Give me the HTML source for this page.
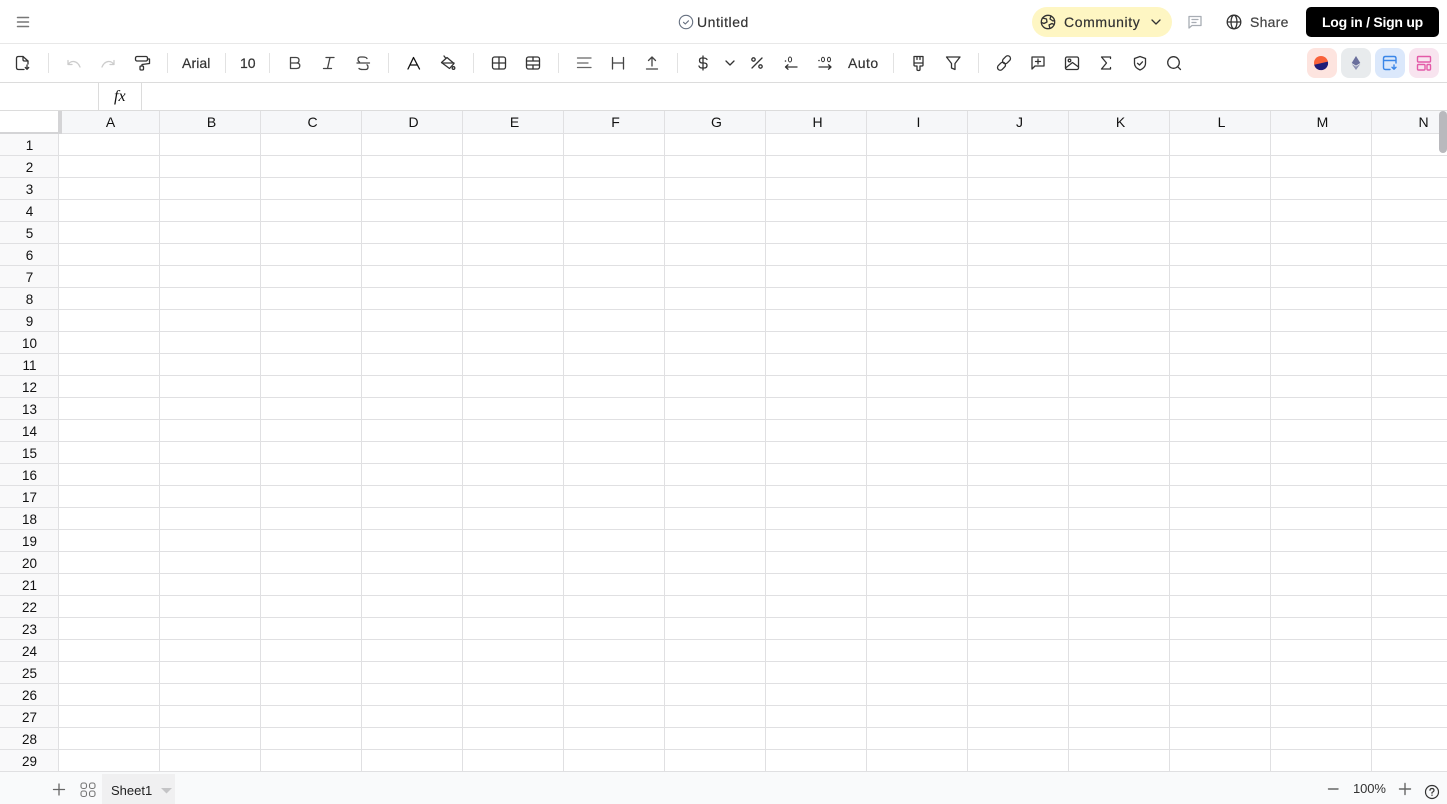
<!DOCTYPE html>
<html><head><meta charset="utf-8"><title>Untitled</title>
<style>
html,body{margin:0;padding:0;width:1447px;height:804px;overflow:hidden;background:#fff;font-family:"Liberation Sans",sans-serif;color:#111}
div{position:absolute;box-sizing:border-box}
.t{white-space:nowrap;line-height:20px;-webkit-text-stroke:.2px currentColor}
#grid{left:0;top:110px;width:1447px;height:661px;background-color:#fff;
background-image:repeating-linear-gradient(90deg,transparent 0,transparent 100px,#e0e0e2 100px,#e0e0e2 101px),repeating-linear-gradient(180deg,transparent 0,transparent 21px,#e0e0e2 21px,#e0e0e2 22px);
background-size:1447px 661px;background-position:59px 0,0 2px}
#rh{left:0;top:134px;width:59px;height:637px;
background-image:repeating-linear-gradient(180deg,#f9f9fa 0,#f9f9fa 21px,#e0e0e2 21px,#e0e0e2 22px);border-right:1px solid #e0e0e2}
#ch{left:59px;top:111px;width:1388px;height:23px;background:#f6f7f9;border-bottom:1px solid #e0e0e2;
background-image:repeating-linear-gradient(90deg,transparent 0,transparent 100px,#e0e0e2 100px,#e0e0e2 101px)}
.c{top:112px;width:101px;text-align:center;font-size:14px;line-height:20px}
.r{left:0;width:59px;text-align:center;font-size:13.5px;line-height:20px}
</style></head><body>
<div id="grid"></div><div id="rh"></div><div id="ch"></div>
<div style="left:0;top:111px;width:58px;height:21px;background:#fff"></div>
<div style="left:0;top:132px;width:58px;height:2px;background:#d4d4d6"></div>
<div style="left:58px;top:111px;width:4px;height:23px;background:#d4d4d6"></div>
<div style="left:0;top:0;width:1447px;height:44px;background:#fff;border-bottom:1px solid #e8e8e8"></div>
<div style="left:0;top:44px;width:1447px;height:39px;background:#fff;border-bottom:1px solid #dcdcdc"></div>
<div style="left:0;top:83px;width:1447px;height:28px;background:#fff;border-bottom:1px solid #dcdcdc"></div>
<div style="left:98px;top:83px;width:44px;height:27px;border-left:1px solid #dcdcdc;border-right:1px solid #dcdcdc"></div>
<div style="left:114px;top:87px;white-space:nowrap;font:italic 16px/20px 'Liberation Serif',serif">fx</div>

<div class="c" style="left:60px">A</div><div class="c" style="left:161px">B</div><div class="c" style="left:262px">C</div><div class="c" style="left:363px">D</div><div class="c" style="left:464px">E</div><div class="c" style="left:565px">F</div><div class="c" style="left:666px">G</div><div class="c" style="left:767px">H</div><div class="c" style="left:868px">I</div><div class="c" style="left:969px">J</div><div class="c" style="left:1070px">K</div><div class="c" style="left:1171px">L</div><div class="c" style="left:1272px">M</div><div class="c" style="left:1373px">N</div>

<div class="r" style="top:136px">1</div><div class="r" style="top:158px">2</div><div class="r" style="top:180px">3</div><div class="r" style="top:202px">4</div><div class="r" style="top:224px">5</div><div class="r" style="top:246px">6</div><div class="r" style="top:268px">7</div><div class="r" style="top:290px">8</div><div class="r" style="top:312px">9</div><div class="r" style="top:334px">10</div><div class="r" style="top:356px">11</div><div class="r" style="top:378px">12</div><div class="r" style="top:400px">13</div><div class="r" style="top:422px">14</div><div class="r" style="top:444px">15</div><div class="r" style="top:466px">16</div><div class="r" style="top:488px">17</div><div class="r" style="top:510px">18</div><div class="r" style="top:532px">19</div><div class="r" style="top:554px">20</div><div class="r" style="top:576px">21</div><div class="r" style="top:598px">22</div><div class="r" style="top:620px">23</div><div class="r" style="top:642px">24</div><div class="r" style="top:664px">25</div><div class="r" style="top:686px">26</div><div class="r" style="top:708px">27</div><div class="r" style="top:730px">28</div><div class="r" style="top:752px">29</div>

<div style="left:1439px;top:111px;width:8px;height:42px;background:#b9b9bd;border-radius:4px"></div>

<!-- footer -->
<div style="left:0;top:771px;width:1447px;height:33px;background:#f9fafb;border-top:1px solid #e0e0e2"></div>
<div style="left:102px;top:774px;width:73px;height:30px;background:#f0f0f1"></div>
<div class="t" style="left:111px;top:781px;font-size:13px;color:#222;-webkit-text-stroke:0">Sheet1</div>
<div class="t" style="left:1353px;top:779px;font-size:13px;color:#333;letter-spacing:-.1px;-webkit-text-stroke:0">100%</div>

<!-- top bar -->
<div class="t" style="left:697px;top:12px;font-size:14px;letter-spacing:.55px;color:#333">Untitled</div>
<div style="left:1032px;top:7px;width:140px;height:30px;background:#fef6c3;border-radius:15px"></div>
<div class="t" style="left:1064px;top:12px;font-size:14px;letter-spacing:.62px;color:#333">Community</div>
<div class="t" style="left:1250px;top:12px;font-size:14px;letter-spacing:.25px;color:#444">Share</div>
<div style="left:1306px;top:7px;width:133px;height:30px;background:#000;border-radius:5px"></div>
<div style="left:1322px;top:12px;white-space:nowrap;line-height:20px;font-size:14px;font-weight:700;color:#fff;letter-spacing:-.25px">Log in / Sign up</div>

<!-- toolbar text -->
<div class="t" style="left:182px;top:53px;font-size:14px;color:#333;letter-spacing:.1px">Arial</div>
<div class="t" style="left:240px;top:53px;font-size:14px;color:#333">10</div>
<div class="t" style="left:848px;top:53px;font-size:14px;color:#333;letter-spacing:.45px">Auto</div>

<!-- right buttons -->
<div style="left:1307px;top:48px;width:30px;height:30px;background:#fde4df;border-radius:8px"></div>
<div style="left:1341px;top:48px;width:30px;height:30px;background:#e8ebed;border-radius:8px"></div>
<div style="left:1375px;top:48px;width:30px;height:30px;background:#dbe8fb;border-radius:8px"></div>
<div style="left:1409px;top:48px;width:30px;height:30px;background:#f8e4ef;border-radius:8px"></div>

<svg width="1447" height="804" viewBox="0 0 1447 804" style="position:absolute;left:0;top:0" fill="none" stroke="#444" stroke-width="1.3" stroke-linecap="round" stroke-linejoin="round">
<!-- separators -->
<g stroke="#e2e2e2" stroke-width="1" stroke-linecap="butt">
<path d="M48.500 53V73M167.500 53V73M225.500 53V73M269.500 53V73M388.500 53V73M473.500 53V73M558.500 53V73M677.500 53V73M893.500 53V73M978.500 53V73"/>
</g>
<!-- menu -->
<path d="M17.500 17.500H28.500M17.500 22H28.500M17.500 26.500H28.500" stroke="#777" stroke-width="1.500"/>
<!-- saved check -->
<g stroke="#667080" stroke-width="1.100"><circle cx="686" cy="22" r="6.700"/><path d="M683.500 22.300L685.300 24L688.500 20.800"/></g>
<!-- community globe -->
<g stroke="#333" stroke-width="1.300"><circle cx="1048" cy="22" r="6.700"/><path d="M1042.500 18L1046.500 19L1047 22L1044 23.500L1041.500 22.500M1051 16L1050 19L1053 21L1054.500 20.500M1050 28.500L1049 25L1052 23.500L1054 24.500"/></g>
<path d="M1152 20L1156 24L1160 20" stroke="#333" stroke-width="1.300"/>
<!-- comment grey -->
<g stroke="#a8adb4" stroke-width="1.300"><path d="M1189 16.500H1201V25.500H1192L1189 28Z"/><path d="M1192 19.500H1198M1192 22.500H1196"/></g>
<!-- share globe -->
<g stroke="#333"><circle cx="1234" cy="22" r="6.800"/><ellipse cx="1234" cy="22" rx="3" ry="6.800"/><path d="M1227.500 22H1240.500"/></g>

<!-- file -->
<path d="M24 69.500H18.500Q16.500 69.500 16.500 67.500V58.500Q16.500 56.500 18.500 56.500H23L28 61V64" stroke="#333"/>
<path d="M23 56.500V59.500Q23 61 24.500 61H28M27 65V69M25.300 67.500L27 69.300L28.700 67.500" stroke="#333"/>
<!-- undo redo -->
<g stroke="#ccc"><path d="M68 60.500V64.500H72M68.500 64C71 60.500 77 60 80 67"/><path d="M114 60.500V64.500H110M113.500 64C111 60.500 105 60 102 67"/></g>
<!-- roller -->
<g stroke="#333"><rect x="135.500" y="56.500" width="12" height="4.500" rx="1.500"/><path d="M147.500 59H149.500V63.500L142 64.500V66"/><rect x="140" y="66" width="3.500" height="4" rx="1"/></g>
<!-- B I S -->
<g stroke="#444"><path d="M290.500 57.500H296Q299 57.500 299 60.200Q299 63 296 63H290.500ZM290.500 63H296.500Q299.800 63 299.800 65.800Q299.800 68.500 296.500 68.500H290.500Z"/>
<path d="M326 57.500H334M323.500 68.500H331.500M330 57.500L327.500 68.500"/>
<path d="M357 63H369.500M367 58.500Q366 57 363 57H360.500Q358 57 358 59.500Q358 61.500 359.500 62M359 68.500Q360 69.500 362.500 69.500H365.500Q368 69.500 368 67Q368 65.500 367 64.800"/></g>
<!-- A -->
<path d="M408 69L413.500 57.500L419.500 69M410 65H417.500" stroke="#111"/>
<!-- bucket -->
<g stroke="#333"><path d="M444 56L446 58.500M441.500 62.500L447 57.500L454 63.500L449.500 68.500Z"/><path d="M442 63H454"/><circle cx="453.500" cy="68" r="1.300"/></g>
<!-- borders -->
<g stroke="#333"><rect x="492.500" y="57" width="13" height="12" rx="2"/><path d="M499 57V69M492.500 63H505.500"/>
<rect x="526.500" y="57" width="13" height="12" rx="2"/><path d="M526.500 61H539.500M526.500 65H539.500M533 57V61M533 65V69"/></g>
<!-- align -->
<g stroke="#666"><path d="M577.500 58H591M577.500 63H588M577.500 67.500H591"/></g>
<g stroke="#444"><path d="M612.500 57.500V69M623.500 57.500V69M612.500 63H623.500"/>
<path d="M646.500 69H657.500M652 66V57.500M648.500 60.500L652 57L655.500 60.500"/></g>
<!-- dollar -->
<g stroke="#333"><path d="M703 56V70M707 59.500Q706 58 703.500 58H702Q699.500 58 699.500 60.500Q699.500 63 702.500 63H704Q707 63 707 65.500Q707 68 704 68H702Q699.500 68 699 66"/>
<path d="M726 61L730 65L734 61"/>
<path d="M752 68L762 58"/><circle cx="753.500" cy="59.500" r="1.700"/><circle cx="760.500" cy="66.500" r="1.700"/>
<!-- decimals -->
<path d="M785.500 67H797M785.500 67L788 64.800M785.500 67L788 69.200"/>
<path d="M819 67H831M831 67L828.500 64.800M831 67L828.500 69.200"/></g>
<g fill="#333" stroke="none"><circle cx="785.500" cy="61" r=".8"/><circle cx="819" cy="60.500" r=".8"/></g>
<g stroke="#333" stroke-width="1"><ellipse cx="790" cy="59.500" rx="1.600" ry="2.500"/><ellipse cx="823" cy="59.500" rx="1.500" ry="2.300"/><ellipse cx="829" cy="59.500" rx="1.500" ry="2.300"/></g>
<!-- brush -->
<g stroke="#333"><path d="M914 56.500H923V63H914ZM914 63V65Q914 66 915 66H917V69.500Q917 70.500 918.500 70.500Q920 70.500 920 69.500V66H922Q923 66 923 65V63"/><path d="M917 57V59.500M920 57V59.500"/></g>
<!-- filter -->
<path d="M946.500 57H960L955 63.500V69.500L951.500 68V63.500Z" stroke="#333"/>
<!-- link -->
<g stroke="#333"><rect x="997" y="63.500" width="9" height="5.500" rx="2.750" transform="rotate(-45 1001.500 66.250)"/><rect x="1002" y="57" width="9" height="5.500" rx="2.750" transform="rotate(-45 1006.500 59.750)"/></g>
<!-- comment plus -->
<g stroke="#333"><path d="M1032 57H1044V66H1035L1032 69Z"/><path d="M1038 59V64M1035.500 61.500H1040.500"/></g>
<!-- image -->
<g stroke="#333"><rect x="1065.500" y="57" width="13" height="12.500" rx="1.500"/><circle cx="1069.500" cy="60.500" r="1.300"/><path d="M1065.500 68L1072.500 62.500L1078.500 67"/></g>
<!-- sigma -->
<path d="M1110.500 58.500V57H1101.500L1106.500 63L1101.500 69H1110.500V67.500" stroke="#333"/>
<!-- shield -->
<g stroke="#333"><path d="M1140 56.500L1145.500 58.500V63.500Q1145.500 67.500 1140 70Q1134.500 67.500 1134.500 63.500V58.500Z"/><path d="M1137.500 63.300L1139.500 65L1142.500 61.800"/></g>
<!-- search -->
<g stroke="#333"><circle cx="1173.500" cy="62.500" r="5.800"/><path d="M1177.800 66.800L1180.500 69.500"/></g>

<!-- logos -->
<circle cx="1321" cy="63" r="7" fill="#f9623b" stroke="none"/>
<path d="M1314.200 64.700L1327.900 61.600A7 7 0 0 1 1314.200 64.700Z" fill="#1f1c78" stroke="none"/>
<path d="M1356 56L1360.300 63L1356 65.600L1351.700 63Z" fill="#6a6f9c" stroke="none"/>
<path d="M1351.700 64L1356 66.600L1360.300 64L1356 70Z" fill="#8e92b4" stroke="none"/>
<g stroke="#3a86e8" stroke-width="1.400"><path d="M1390 69.500H1385.500Q1383.500 69.500 1383.500 67.500V58.500Q1383.500 56.500 1385.500 56.500H1394Q1396 56.500 1396 58.500V63M1383.500 60.500H1396"/><path d="M1394 65V69M1392 67.300L1394 69.200L1396 67.300"/></g>
<g stroke="#e35aa8" stroke-width="1.400"><rect x="1417.500" y="56.500" width="13" height="5.500" rx="1"/><rect x="1417.500" y="64.500" width="7.500" height="5.500" rx="1"/><rect x="1427" y="64.500" width="3.500" height="5.500" rx="1"/></g>

<!-- footer icons -->
<path d="M53.500 789.500H64.500M59 784V795" stroke="#666" stroke-width="1.300"/>
<g stroke="#777" stroke-width="1.100"><rect x="81" y="783" width="5.500" height="5.500" rx="2"/><rect x="89.500" y="783" width="5.500" height="5.500" rx="2"/><rect x="81" y="791" width="5.500" height="5.500" rx="2"/><rect x="89.500" y="791" width="5.500" height="5.500" rx="2"/></g>
<path d="M161 788H172L166.500 793.500Z" fill="#c4c4c6" stroke="none"/>
<path d="M1328.500 789H1338" stroke="#666" stroke-width="1.400"/>
<path d="M1399.500 789H1410.500M1405 783.500V794.500" stroke="#666" stroke-width="1.400"/>
<g stroke="#333" stroke-width="1.200"><circle cx="1432" cy="792" r="6.500"/><path d="M1430 790.300Q1430 788.500 1432 788.500Q1434 788.500 1434 790.300Q1434 791.500 1432 792.500V793.300"/></g>
<circle cx="1432" cy="795.200" r=".7" fill="#333" stroke="none"/>
</svg>
</body></html>
